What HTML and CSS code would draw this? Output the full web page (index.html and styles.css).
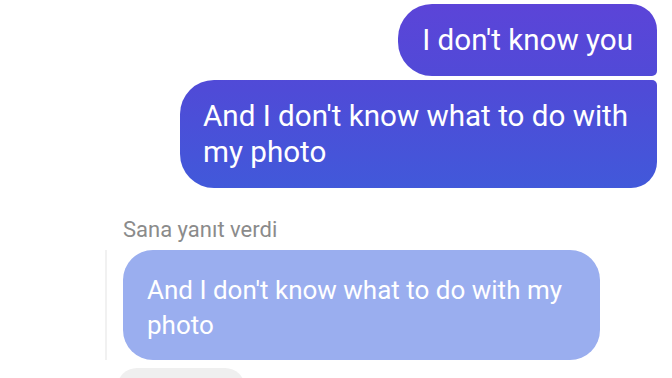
FILE: index.html
```html
<!DOCTYPE html>
<html lang="tr">
<head>
    <meta charset="UTF-8">
    <meta name="viewport" content="width=device-width, initial-scale=1.0">
    <title>Sohbet</title>
    <link rel="stylesheet" href="styles.css">
</head>
<body>

<div class="chat">

    <!-- my messages -->
    <div class="group_out">
        <div class="bubble out first">I don't know you</div>
        <div class="bubble out last">And I don't know what to do with my photo</div>
    </div>

    <!-- their reply -->
    <div class="group_in">
        <div class="reply_label">Sana yanıt verdi</div>
        <div class="reply_quote">
            <div class="bubble quoted">And I don't know what to do with my photo</div>
        </div>
        <div class="bubble incoming"></div>
    </div>

</div>

</body>
</html>
```

FILE: styles.css
```css
html, body {
  margin: 0;
  padding: 0;
  background: #ffffff;
  overflow: hidden;
}

.chat {
  width: 672px;
  height: 378px;
  padding: 4px 15px 0 0;
  box-sizing: border-box;
  overflow: hidden;
  font-family: Roboto, "Noto Sans", sans-serif;
}

.bubble {
  color: #ffffff;
  box-sizing: border-box;
  overflow-wrap: break-word;
}

/* outgoing */
.group_out {
  display: flex;
  flex-direction: column;
  align-items: flex-end;
  gap: 4px;
}

.bubble.out {
  max-width: 477px;
  font-size: 29.6px;
  line-height: 36px;
  padding: 18px 22px 18px 23px;
  background: linear-gradient(to bottom, #5c44d8 0px, #4f4bd7 90px, #4159da 190px);
  background-attachment: fixed;
}

.bubble.out.first {
  border-radius: 34px 26px 5px 34px;
  padding-left: 24px;
  padding-right: 24px;
}

.bubble.out.last {
  border-radius: 34px 5px 26px 34px;
}

/* incoming */
.group_in {
  padding-left: 105px;
  margin-top: 30px;
}

.reply_label {
  font-size: 22px;
  line-height: 24px;
  color: #8b8b8b;
  padding-left: 18px;
  margin-bottom: 8px;
}

.reply_quote {
  border-left: 2px solid #f1f1f1;
  padding-left: 16px;
  display: flex;
}

.bubble.quoted {
  width: 477px;
  font-size: 26px;
  line-height: 35px;
  padding: 23px 24px 17px 24px;
  border-radius: 30px;
  background: #9aaeef;
}

.bubble.incoming {
  width: 128px;
  height: 40px;
  margin: 8px 0 0 12px;
  border-radius: 30px;
  background: #efefef;
}
```
